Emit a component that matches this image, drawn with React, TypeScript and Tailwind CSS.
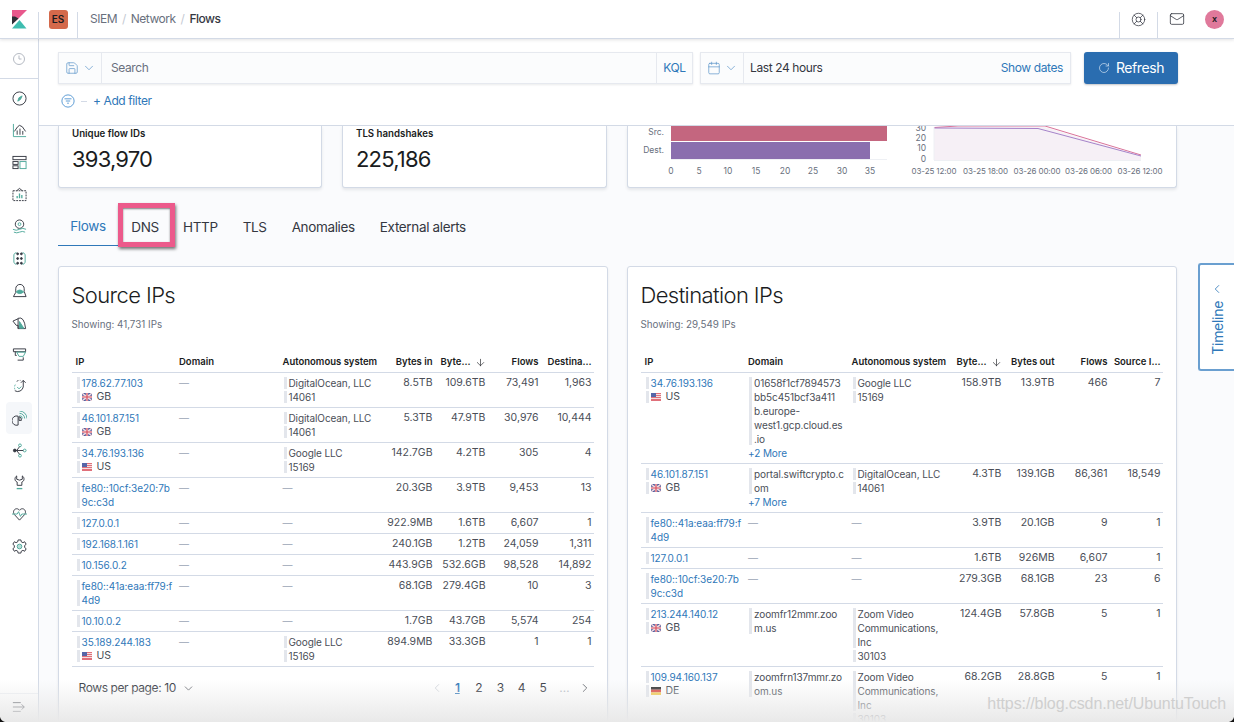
import { ChevronDown, ChevronLeft, ChevronRight, ArrowDown, RotateCw, Mail, LifeBuoy, Calendar, Save } from "lucide-react";
import type { ReactNode } from "react";

const DARK = "#343741";
const TEAL = "#4fa99b";

function Svg({ children, size = 16 }: { children: ReactNode; size?: number }) {
  return (
    <svg width={size} height={size} viewBox="0 0 16 16" fill="none" stroke={DARK} strokeWidth="1">
      {children}
    </svg>
  );
}

const navIcons: ReactNode[] = [
  <><circle cx="8" cy="8" r="7" /><path d="M10.8 5.2 9 9 6.2 10.8 7.4 7.2z" fill={TEAL} stroke={TEAL} /></>,
  <><path d="M1.5 1v13.5H15" stroke={TEAL} /><path d="M2.5 9 6 4l2-1.5L11 4l3.5 5" /><path d="M5.5 12.5V8M8.5 12.5V6M11.5 12.5V8.5" /></>,
  <><rect x="1" y="1.5" width="14" height="3.5" /><rect x="1" y="7" width="5.5" height="3" /><rect x="1" y="11.5" width="5.5" height="3" /><rect x="8.5" y="7" width="6.5" height="7.5" stroke={TEAL} /></>,
  <><rect x="1" y="4" width="14" height="10.5" strokeDasharray="2 1" /><path d="M5 4 8 1.5 11 4" /><path d="M5.5 12V9.5M8 12V7M10.500 12V8.500" stroke={TEAL} strokeWidth="1.4" /></>,
  <><circle cx="8" cy="5.500" r="4.500" /><circle cx="8" cy="5.500" r="1.500" stroke={TEAL} /><path d="M1 11q3.500 2 7 0t7 0M2 14q3 1.500 6 0t6 0" stroke={TEAL} /></>,
  <><path d="M5 2H3.500L2 4v8l1.500 2H5M11 2h1.500L14 4v8l-1.500 2H11" stroke={TEAL} /><circle cx="6" cy="3" r="1" fill={DARK} /><circle cx="10" cy="3" r="1" fill={DARK} /><circle cx="6" cy="8" r="1" fill={DARK} /><circle cx="10" cy="8" r="1" fill={DARK} /><circle cx="6" cy="13" r="1" fill={DARK} /><circle cx="10" cy="13" r="1" fill={DARK} /></>,
  <><path d="M1.500 14.500 4 10V6a4.500 4.500 0 0 1 9 0v3l2 5.500z" /><path d="M4.500 9.500Q8 5.500 12.500 9.500 8 13 4.500 9.500z" fill={TEAL} stroke={TEAL} /></>,
  <><path d="M6.500 4 1 6.500 4.500 11H6.500v3.500" /><path d="M6.500 3.500Q13 1 14.500 14.500H6.500z" /><path d="M8 7l4.500 7H8z" fill={TEAL} stroke={TEAL} /></>,
  <><path d="M1.500 2h13v3h-13zM3.500 5v4H5" /><path d="M5 5.500h9.500L12 10H7.500z" stroke={TEAL} /><path d="M6 14h6V11" /></>,
  <><path d="M3.500 6a6 6 0 0 0-.5 5" strokeDasharray="2 1.500" stroke={TEAL} /><path d="M3 12.500a6 6 0 0 0 9-4V1.500M9.500 4l2.500-2.500L14.500 4" /><path d="M5 2.500a6 6 0 0 1 4-1" strokeDasharray="2 1.500" /><path d="M5.500 8.500 7.500 10.500 10 8" stroke={TEAL} /></>,
  <><path d="M8 2.500a5.500 5.500 0 0 1 5.500 5.500M8 0a8 8 0 0 1 8 8M8 5a3 3 0 0 1 3 3" stroke={TEAL} /><path d="M6.500 5.500a5 5 0 1 0 0 9.500zM7.500 10H10a3.500 3.500 0 0 0-2.500-4z" /></>,
  <><circle cx="8.500" cy="2.500" r="1.500" stroke={TEAL} /><circle cx="8.500" cy="13.500" r="1.500" stroke={TEAL} /><circle cx="13.500" cy="8" r="1.500" stroke={TEAL} /><circle cx="3" cy="8" r="1.500" fill={DARK} /><path d="M3 8h9M8 4l-3 4 3 4" /></>,
  <><path d="M5 1C2.500 2.500 2.500 6.500 5.500 7.500V11h5V7.500C13.500 6.500 13.500 2.500 11 1v3.500L8 5.500 5 4.500z" /><path d="M5 14.500h6" stroke={TEAL} strokeWidth="1.400" /></>,
  <><path d="M2.500 8C-.5 3.500 5 -.500 8 3.500 11-.500 16.500 3.500 13.500 8L8 14z" /><path d="M0 7.500h5.500l1.500-2.500 2 5 1.500-2.500H16" stroke={TEAL} /></>,
  <><circle cx="8" cy="8" r="2.500" stroke={TEAL} fill={TEAL} fillOpacity="0.4" /><path d="M6.500 1h3l.4 2 1.800.9 1.800-1 1.600 2.700-1.600 1.300v2.200l1.600 1.300-1.600 2.700-1.800-1-1.800.9-.4 2h-3l-.4-2-1.800-.9-1.800 1L.9 10.400 2.500 9.100V6.900L.9 5.600l1.600-2.700 1.800 1 1.800-.9z" /></>,
];

function Nav() {
  return (
    <aside className="w-[39px] shrink-0 bg-white border-r border-[#d3dae6] flex flex-col h-[683px]">
      <div className="h-[40px] flex items-center justify-center border-b border-[#d3dae6] shrink-0">
        <svg width="16" height="16" viewBox="0 0 16 16" fill="none" stroke="#b5bac3">
          <circle cx="8" cy="8" r="5.500" />
          <path d="M8 4.500V8h2.500" />
        </svg>
      </div>
      <div className="flex flex-col items-center pt-[3px] flex-1">
        {navIcons.map((icon, i) => (
          <div key={i} className={`w-[26px] h-[32px] flex items-center justify-center rounded ${i === 10 ? "bg-[#f5f7fa]" : ""}`}>
            <Svg size={15}>{icon}</Svg>
          </div>
        ))}
      </div>
      <div className="h-[29px] shrink-0 bg-white border-t border-[#eef0f4] flex items-center justify-center pb-[2px]">
        <svg width="14" height="14" viewBox="0 0 16 16" fill="none" stroke={DARK}>
          <path d="M1 3h9M1 8h13M1 13h9M11 5l3 3-3 3" />
        </svg>
      </div>
    </aside>
  );
}

const Divider = () => <div className="w-px h-[26px] bg-[#d3dae6] self-end shrink-0" />;

function Header() {
  return (
    <header className="h-[39px] shrink-0 bg-white border-b border-[#d3dae6] shadow-[0_1px_3px_rgba(52,55,65,0.15)] flex items-stretch relative z-20">
      <div className="w-[38px] flex items-center justify-center">
        <svg width="15" height="19" viewBox="0 0 15 19">
          <path d="M0 0h15L6.500 8.500 0 14z" fill="#e8588c" />
          <path d="M0 6.500V14.500L6.500 8.500 3 6.500z" fill="#2c2e36" />
          <path d="M0 18.500 7.500 10 14.500 18.500z" fill="#3fbdb0" />
        </svg>
      </div>
      <Divider />
      <div className="w-[38px] flex items-center justify-center">
        <div className="w-[19px] h-[19px] rounded-[3px] bg-[#d4694b] flex items-center justify-center text-[10px] font-semibold text-[#1a1c21]">ES</div>
      </div>
      <Divider />
      <div className="flex items-center pl-[12px] text-[12px] tracking-[-0.5px] text-[#69707d]">
        <span>SIEM</span>
        <span className="mx-[5px] text-[#c5cad3]">/</span>
        <span>Network</span>
        <span className="mx-[5px] text-[#c5cad3]">/</span>
        <span className="text-[#343741] font-medium">Flows</span>
      </div>
      <div className="flex-1" />
      <Divider />
      <div className="w-[37px] flex items-center justify-center">
        <LifeBuoy size={15} color={DARK} strokeWidth={1.2} />
      </div>
      <Divider />
      <div className="w-[37px] flex items-center justify-center">
        <Mail size={16} color={DARK} strokeWidth={1.2} />
      </div>
      <div className="w-[39px] flex items-center justify-center">
        <div className="w-[19px] h-[19px] rounded-full bg-[#e0799b] flex items-center justify-center text-[9px] font-semibold text-[#1a1c21]">x</div>
      </div>
    </header>
  );
}

function FilterBar() {
  return (
    <div className="h-[87px] shrink-0 bg-white border-b border-[#d3dae6] pl-[19px] pr-[56px] pt-[13px] relative z-10 tracking-[-0.4px]">
      <div className="flex items-stretch h-[32px]">
        <div className="w-[635px] flex border border-[#e6e9ef] bg-[#fbfcfd] shadow-[0_1px_2px_rgba(52,55,65,0.1)]">
          <div className="w-[43px] border-r border-[#e6e9ef] flex items-center justify-center gap-[3px] text-[#5a93c9]">
            <Save size={14} strokeWidth={1.2} />
            <ChevronDown size={14} strokeWidth={1.2} />
          </div>
          <div className="flex-1 pl-[9px] flex items-center text-[12px] text-[#69707d]">Search</div>
          <div className="w-[36px] border-l border-[#e6e9ef] flex items-center justify-center text-[12px] text-[#2f78b9]">KQL</div>
        </div>
        <div className="ml-[7px] w-[371px] flex border border-[#e6e9ef] bg-[#fbfcfd] shadow-[0_1px_2px_rgba(52,55,65,0.1)]">
          <div className="w-[43px] border-r border-[#e6e9ef] flex items-center justify-center gap-[3px] text-[#5a93c9]">
            <Calendar size={14} strokeWidth={1.2} />
            <ChevronDown size={14} strokeWidth={1.2} />
          </div>
          <div className="flex-1 pl-[6px] flex items-center text-[12px] text-[#343741]">Last 24 hours</div>
          <div className="pr-[7px] flex items-center text-[12px] text-[#2f78b9]">Show dates</div>
        </div>
        <div className="ml-[13px] w-[94px] rounded-[3px] bg-[#2a6db0] shadow-[0_1px_2px_rgba(52,55,65,0.3)] flex items-center justify-center gap-[6px] pb-[1px] text-[14px] text-white">
          <RotateCw size={12} strokeWidth={1.4} className="text-[#cfe0f0]" />
          Refresh
        </div>
      </div>
      <div className="flex items-center h-[30px] mt-[2px] pl-[3px] text-[12px] text-[#2f78b9]">
        <svg width="14" height="14" viewBox="0 0 16 16" fill="none" stroke="#4a90cf">
          <circle cx="8" cy="8" r="7" />
          <path d="M4 5.500h8M5.500 8h5M7 10.500h2" />
        </svg>
        <span className="w-[6px] h-px bg-[#d3dae6] mx-[6px]" />
        <span>+ Add filter</span>
      </div>
    </div>
  );
}

function Stat({ label, value, width }: { label: string; value: string; width: string }) {
  return (
    <div className={`${width} bg-white border border-t-0 border-[#d3dae6] rounded-b-[3px] shadow-[0_2px_3px_rgba(52,55,65,0.1)] pl-[13px] pt-[1px]`}>
      <div className="text-[9.700px] leading-[14px] font-semibold text-[#1a1c21]">{label}</div>
      <div className="text-[22px] tracking-[-0.800px] leading-[36px] text-[#1a1c21]">{value}</div>
    </div>
  );
}

function Charts() {
  const bottom: [string, number][] = [
    ["0", 43],
    ["5", 71],
    ["10", 100],
    ["15", 128],
    ["20", 157],
    ["25", 185],
    ["30", 214],
    ["35", 242],
  ];
  return (
    <div className="w-[550px] h-[62px] bg-white border border-t-0 border-[#d3dae6] rounded-b-[3px] shadow-[0_2px_3px_rgba(52,55,65,0.1)] overflow-hidden">
      <svg width="548" height="62" viewBox="0 0 548 62">
        <text x="36" y="9" textAnchor="end" fontSize="8.500" fill="#69707d">Src.</text>
        <text x="36" y="27" textAnchor="end" fontSize="8.500" fill="#69707d">Dest.</text>
        <rect x="43" y="0" width="216" height="15" fill="#c4667f" />
        <rect x="43" y="16" width="199" height="17" fill="#8a6eae" />
        <path d="M43 33.500h216" stroke="#eef0f4" />
        {bottom.map(([t, x]) => (
          <text key={t} x={x} y="48" textAnchor="middle" fontSize="8.500" fill="#69707d">{t}</text>
        ))}
        <path d="M306 1H417L513 30V34H306z" fill="#f6f0f6" />
        <path d="M306 1.500L330 0H417L513 29" fill="none" stroke="#d9739a" />
        <path d="M306 2L410 2.500L513 30" fill="none" stroke="#a583c9" />
        <path d="M306 1v33M306 34.500H513" stroke="#eef0f4" />
        <text x="298" y="5" textAnchor="end" fontSize="8.500" fill="#69707d">30</text>
        <text x="298" y="15" textAnchor="end" fontSize="8.500" fill="#69707d">20</text>
        <text x="298" y="25" textAnchor="end" fontSize="8.500" fill="#69707d">10</text>
        <text x="298" y="36" textAnchor="end" fontSize="8.500" fill="#69707d">0</text>
        {["03-25 12:00", "03-25 18:00", "03-26 00:00", "03-26 06:00", "03-26 12:00"].map((t, i) => (
          <text key={t} x={306 + i * 51.500} y="48" textAnchor="middle" fontSize="8" letterSpacing="-0.1" fill="#69707d">{t}</text>
        ))}
      </svg>
    </div>
  );
}

function Tabs() {
  return (
    <div className="flex items-center h-[38px] mt-[20px] text-[13.500px] tracking-[-0.350px] text-[#343741]">
      <div className="w-[60px] h-[38px] flex items-center justify-center text-[#2f78b9] border-b-[1.500px] border-[#2f78b9]">Flows</div>
      <div className="w-[57px] h-[44px] pt-[4px] pr-[3px] flex items-center justify-center border-[5px] border-[#ec5a8b] shadow-[1px_2px_3px_rgba(0,0,0,0.55),inset_0_1px_2px_rgba(0,0,0,0.5)] relative -top-[2px]">DNS</div>
      <div className="ml-[8px] flex items-center gap-[25px]">
        <span>HTTP</span>
        <span>TLS</span>
        <span>Anomalies</span>
        <span>External alerts</span>
      </div>
    </div>
  );
}

function Flag({ code }: { code: string }) {
  if (code === "US") {
    return (
      <svg width="10" height="8" viewBox="0 0 10 8">
        <rect width="10" height="8" fill="#e0707a" />
        <path d="M0 1.500h10M0 3.500h10M0 5.500h10" stroke="#f4dfe0" />
        <rect width="5" height="4" fill="#5566a8" />
      </svg>
    );
  }
  if (code === "DE") {
    return (
      <svg width="10" height="8" viewBox="0 0 10 8">
        <rect width="10" height="2.700" fill="#2b2b2b" />
        <rect y="2.700" width="10" height="2.700" fill="#d8403a" />
        <rect y="5.400" width="10" height="2.600" fill="#f2c53d" />
      </svg>
    );
  }
  return (
    <svg width="10" height="8" viewBox="0 0 10 8">
      <rect width="10" height="8" fill="#4a5a9c" />
      <path d="M0 0 10 8M10 0 0 8" stroke="#f3dbe0" strokeWidth="1.400" />
      <path d="M5 0v8M0 4h10" stroke="#f3dbe0" strokeWidth="2.400" />
      <path d="M5 0v8M0 4h10" stroke="#d6505f" strokeWidth="1.200" />
    </svg>
  );
}

function Handle({ children }: { children: ReactNode }) {
  return (
    <div className="flex ml-[1px]">
      <div className="w-[3px] bg-[#e3e6ec] mr-[2px] my-[1px] shrink-0" />
      <div>{children}</div>
    </div>
  );
}

const Dash = () => <span className="text-[#98a2b3]">—</span>;

type Row = {
  ip: string[];
  country?: string;
  domain?: string[];
  more?: string;
  as?: string[];
  nums: string[];
};

const leftRows: Row[] = [
  { ip: ["178.62.77.103"], country: "GB", as: ["DigitalOcean, LLC", "14061"], nums: ["8.5TB", "109.6TB", "73,491", "1,963"] },
  { ip: ["46.101.87.151"], country: "GB", as: ["DigitalOcean, LLC", "14061"], nums: ["5.3TB", "47.9TB", "30,976", "10,444"] },
  { ip: ["34.76.193.136"], country: "US", as: ["Google LLC", "15169"], nums: ["142.7GB", "4.2TB", "305", "4"] },
  { ip: ["fe80::10cf:3e20:7b", "9c:c3d"], nums: ["20.3GB", "3.9TB", "9,453", "13"] },
  { ip: ["127.0.0.1"], nums: ["922.9MB", "1.6TB", "6,607", "1"] },
  { ip: ["192.168.1.161"], nums: ["240.1GB", "1.2TB", "24,059", "1,311"] },
  { ip: ["10.156.0.2"], nums: ["443.9GB", "532.6GB", "98,528", "14,892"] },
  { ip: ["fe80::41a:eaa:ff79:f", "4d9"], nums: ["68.1GB", "279.4GB", "10", "3"] },
  { ip: ["10.10.0.2"], nums: ["1.7GB", "43.7GB", "5,574", "254"] },
  { ip: ["35.189.244.183"], country: "US", as: ["Google LLC", "15169"], nums: ["894.9MB", "33.3GB", "1", "1"] },
];

const rightRows: Row[] = [
  {
    ip: ["34.76.193.136"],
    country: "US",
    domain: ["01658f1cf7894573", "bb5c451bcf3a411", "b.europe-", "west1.gcp.cloud.es", ".io"],
    more: "+2 More",
    as: ["Google LLC", "15169"],
    nums: ["158.9TB", "13.9TB", "466", "7"],
  },
  {
    ip: ["46.101.87.151"],
    country: "GB",
    domain: ["portal.swiftcrypto.c", "om"],
    more: "+7 More",
    as: ["DigitalOcean, LLC", "14061"],
    nums: ["4.3TB", "139.1GB", "86,361", "18,549"],
  },
  { ip: ["fe80::41a:eaa:ff79:f", "4d9"], nums: ["3.9TB", "20.1GB", "9", "1"] },
  { ip: ["127.0.0.1"], nums: ["1.6TB", "926MB", "6,607", "1"] },
  { ip: ["fe80::10cf:3e20:7b", "9c:c3d"], nums: ["279.3GB", "68.1GB", "23", "6"] },
  {
    ip: ["213.244.140.12"],
    country: "GB",
    domain: ["zoomfr12mmr.zoo", "m.us"],
    as: ["Zoom Video", "Communications,", "Inc", "30103"],
    nums: ["124.4GB", "57.8GB", "5", "1"],
  },
  {
    ip: ["109.94.160.137"],
    country: "DE",
    domain: ["zoomfrn137mmr.zo", "om.us"],
    as: ["Zoom Video", "Communications,", "Inc", "30103"],
    nums: ["68.2GB", "28.8GB", "5", "1"],
  },
];

function Lines({ lines }: { lines: string[] }) {
  return (
    <>
      {lines.map((l) => (
        <div key={l} className="whitespace-nowrap">{l}</div>
      ))}
    </>
  );
}

const gridCols = "grid grid-cols-[103.500px_103.500px_104px_53px_53px_53px_53px]";

function TableRow({ row }: { row: Row }) {
  const asLast = row.as ? row.as[row.as.length - 1] : "";
  return (
    <div className={`${gridCols} border-b border-[#d3dae6] py-[3px] text-[10.500px] leading-[14px] text-[#4a4e57]`}>
      <div className="pl-[4px] min-w-0">
        <Handle>
          <div className="text-[#2f78b9] text-[10px] tracking-[-0.050px]">
            <Lines lines={row.ip} />
          </div>
        </Handle>
        {row.country && (
          <Handle>
            <div className="flex items-center gap-[5px] h-[14px]">
              <Flag code={row.country} />
              <span>{row.country}</span>
            </div>
          </Handle>
        )}
      </div>
      <div className="pl-[4px] min-w-0 text-[10px] tracking-[-0.100px]">
        {row.domain ? (
          <>
            <Handle>
              <Lines lines={row.domain} />
            </Handle>
            {row.more && <div className="text-[#2f78b9]">{row.more}</div>}
          </>
        ) : (
          <Dash />
        )}
      </div>
      <div className="pl-[4px] min-w-0 text-[10px] tracking-[-0.100px]">
        {row.as ? (
          <>
            <Handle>
              <Lines lines={row.as.slice(0, -1)} />
            </Handle>
            <Handle>{asLast}</Handle>
          </>
        ) : (
          <Dash />
        )}
      </div>
      {row.nums.map((n, i) => (
        <div key={i} className="text-right pr-[3px]">{n}</div>
      ))}
    </div>
  );
}

function TableHead({ cols }: { cols: string[] }) {
  return (
    <div className={`${gridCols} border-b border-[#d3dae6] h-[21px] items-center text-[9.500px] font-semibold text-[#1a1c21] whitespace-nowrap`}>
      {cols.map((c, i) => (
        <div key={c} className={i < 3 ? "pl-[4px]" : "text-right pr-[3px] flex justify-end items-center gap-[4px]"}>
          {c.endsWith("↓") ? (
            <>
              {c.slice(0, -1)}
              <ArrowDown size={11} strokeWidth={1.4} />
            </>
          ) : (
            c
          )}
        </div>
      ))}
    </div>
  );
}

function Panel({ title, showing, cols, rows, pager }: { title: string; showing: string; cols: string[]; rows: Row[]; pager?: boolean }) {
  return (
    <div className="w-[550px] h-[520px] bg-white border border-[#d3dae6] rounded-[3px] shadow-[0_2px_3px_rgba(52,55,65,0.08)] pl-[12.500px] pr-[13px] pt-[13px] shrink-0">
      <div className="text-[22px] tracking-[-0.600px] leading-[30px] text-[#1a1c21] font-light">{title}</div>
      <div className="text-[9.800px] leading-[14px] text-[#69707d] mt-[8px]">{showing}</div>
      <div className="mt-[20px]">
        <TableHead cols={cols} />
        {rows.map((r) => (
          <TableRow key={r.ip[0]} row={r} />
        ))}
      </div>
      {pager && (
        <div className="flex items-center justify-between h-[42px] pl-[7px] pr-[2px] text-[12px] tracking-[-0.400px] text-[#343741]">
          <div className="flex items-center gap-[6px]">
            Rows per page: 10
            <ChevronDown size={13} strokeWidth={1.3} />
          </div>
          <div className="flex items-center">
            <ChevronLeft size={14} strokeWidth={1.2} className="text-[#c2c7d0] mr-[3px]" />
            {["1", "2", "3", "4", "5", "…"].map((p) => (
              <span key={p} className={`w-[21.400px] text-center ${p === "1" ? "text-[#2f78b9] underline font-semibold" : p === "…" ? "text-[#b5bac3]" : ""}`}>{p}</span>
            ))}
            <ChevronRight size={14} strokeWidth={1.3} className="ml-[3px]" />
          </div>
        </div>
      )}
    </div>
  );
}

export default function App() {
  return (
    <div className="w-[1234px] h-[722px] overflow-hidden relative flex flex-col bg-[#fafbfd] font-['Inter',sans-serif]">
      <Header />
      <div className="flex flex-1 min-h-0">
        <Nav />
        <main className="flex-1 min-w-0 flex flex-col overflow-hidden">
          <FilterBar />
          <div className="pl-[19px] pr-[57px]">
            <div className="flex gap-[20px] h-[62px]">
              <Stat label="Unique flow IDs" value="393,970" width="w-[264px]" />
              <Stat label="TLS handshakes" value="225,186" width="w-[265px]" />
              <Charts />
            </div>
            <Tabs />
            <div className="flex gap-[19px] mt-[20px]">
              <Panel
                title="Source IPs"
                showing="Showing: 41,731 IPs"
                cols={["IP", "Domain", "Autonomous system", "Bytes in", "Byte...↓", "Flows", "Destina..."]}
                rows={leftRows}
                pager
              />
              <Panel
                title="Destination IPs"
                showing="Showing: 29,549 IPs"
                cols={["IP", "Domain", "Autonomous system", "Byte...↓", "Bytes out", "Flows", "Source I..."]}
                rows={rightRows}
              />
            </div>
          </div>
        </main>
      </div>

      <div className="absolute right-0 top-[263px] w-[36px] h-[108px] bg-white border-2 border-r-0 border-[#6a9fd0] rounded-l-[3px] flex flex-col items-center text-[#2f78b9]">
        <ChevronLeft size={14} strokeWidth={1.4} className="mt-[17px]" />
        <span className="text-[14px] tracking-[-0.300px] mt-[5px] [writing-mode:vertical-rl] rotate-180">Timeline</span>
      </div>

      <div className="absolute left-0 right-0 bottom-0 h-[42px] bg-gradient-to-b from-transparent to-[#e9e9e9] pointer-events-none z-30" />
      <div className="absolute right-[8px] bottom-[7px] text-[16px] leading-[22px] text-[#cfcfcf] tracking-[-0.100px] font-['Liberation_Sans',sans-serif] z-40">https://blog.csdn.net/UbuntuTouch</div>

      <svg className="absolute left-0 bottom-0 z-40" width="5" height="5" viewBox="0 0 5 5"><path d="M0 0Q1 4 5 5H0z" fill="#111" /></svg>
      <svg className="absolute right-0 bottom-0 z-40" width="5" height="5" viewBox="0 0 5 5"><path d="M5 0Q4 4 0 5H5z" fill="#111" /></svg>
    </div>
  );
}
